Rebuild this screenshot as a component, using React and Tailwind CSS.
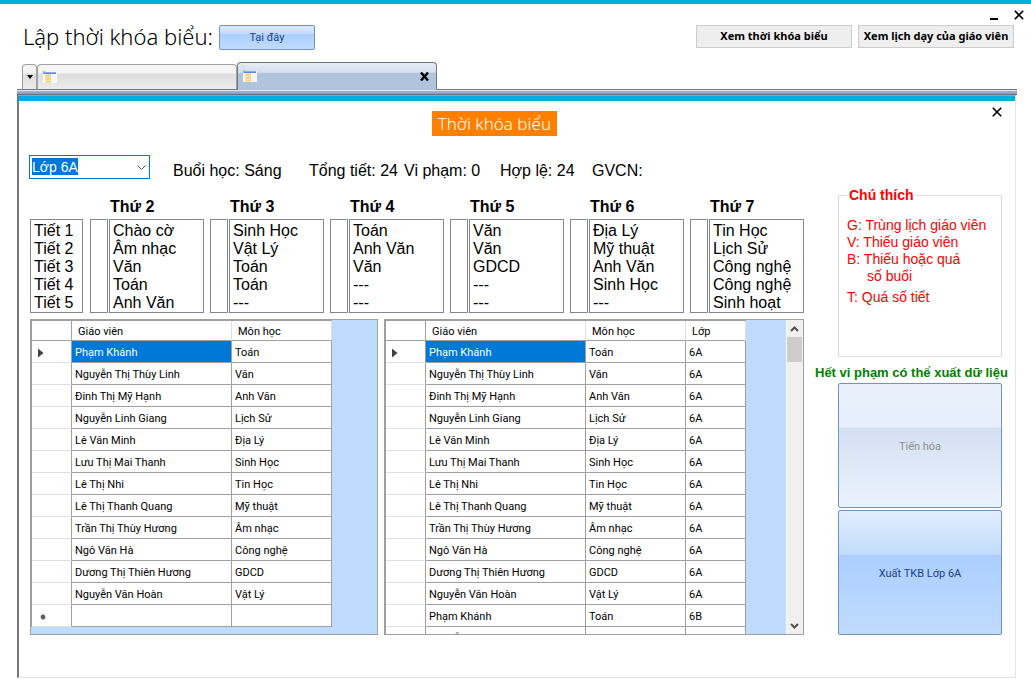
import React, { useState } from "react";

const periods = ["Tiết 1", "Tiết 2", "Tiết 3", "Tiết 4", "Tiết 5"];

const days = [
  { name: "Thứ 2", lessons: ["Chào cờ", "Âm nhạc", "Văn", "Toán", "Anh Văn"] },
  { name: "Thứ 3", lessons: ["Sinh Học", "Vật Lý", "Toán", "Toán", "---"] },
  { name: "Thứ 4", lessons: ["Toán", "Anh Văn", "Văn", "---", "---"] },
  { name: "Thứ 5", lessons: ["Văn", "Văn", "GDCD", "---", "---"] },
  {
    name: "Thứ 6",
    lessons: ["Địa Lý", "Mỹ thuật", "Anh Văn", "Sinh Học", "---"],
  },
  {
    name: "Thứ 7",
    lessons: ["Tin Học", "Lịch Sử", "Công nghệ", "Công nghệ", "Sinh hoạt"],
  },
];

const teachers = [
  ["Phạm Khánh", "Toán"],
  ["Nguyễn Thị Thùy Linh", "Văn"],
  ["Đinh Thị Mỹ Hạnh", "Anh Văn"],
  ["Nguyễn Linh Giang", "Lịch Sử"],
  ["Lê Văn Minh", "Địa Lý"],
  ["Lưu Thị Mai Thanh", "Sinh Học"],
  ["Lê Thị Nhi", "Tin Học"],
  ["Lê Thị Thanh Quang", "Mỹ thuật"],
  ["Trần Thị Thùy Hương", "Âm nhạc"],
  ["Ngô Văn Hà", "Công nghệ"],
  ["Dương Thị Thiên Hương", "GDCD"],
  ["Nguyễn Văn Hoàn", "Vật Lý"],
];

const classRows = [...teachers, ["", ""]];

const allRows = [
  ...teachers.map((row) => [...row, "6A"]),
  ["Phạm Khánh", "Toán", "6B"],
  ["Nguyễn Thị Thùy Linh", "Văn", "6B"],
];

const CloseIcon = () => (
  <svg width="10" height="10" viewBox="0 0 10 10" stroke="#000" strokeWidth="1.6">
    <path d="M0.8 0.8L9.2 9.2M9.2 0.8L0.8 9.2" />
  </svg>
);

const TabIcon = () => (
  <svg width="15" height="13" viewBox="0 0 15 13">
    <rect x="1" y="1" width="14" height="11" fill="#f8f8f6" />
    <rect x="0" y="0" width="4" height="1" fill="#d9cbb0" />
    <rect x="1" y="1" width="13" height="2" fill="#8fabe8" />
    <rect x="2" y="2" width="12" height="1" fill="#5f86dd" />
    <rect x="3" y="3" width="6" height="9" fill="#f6e3ae" />
    <rect x="4" y="4" width="5" height="2" fill="#efd48a" />
    <rect x="4" y="7" width="5" height="2" fill="#efd48a" />
    <rect x="4" y="10" width="5" height="1" fill="#efd48a" />
  </svg>
);

// List of lesson lines in a thin grey frame
const ListBox = ({ items = [], className }) => (
  <ul
    className={`h-[94px] border border-[#828790] bg-white pt-0.5 pl-[3px] text-base leading-[18px] whitespace-nowrap ${className}`}
  >
    {items.map((item, index) => (
      <li key={index}>{item}</li>
    ))}
  </ul>
);

const DataGrid = ({ columns, rows, newRow = false }) => (
  <table className="w-0 table-fixed border-separate border-spacing-0 border-t border-l border-[#a0a0a0] bg-white text-left font-[Roboto,'Liberation_Sans',sans-serif] text-[11px] leading-[14px] whitespace-nowrap">
    <thead>
      <tr className="h-5">
        <th className="w-10 border-r border-b border-[#a0a0a0] p-0" />
        {columns.map((column) => (
          <th
            key={column.label}
            className={`border-r border-b border-r-[#e0e0e0] border-b-[#a0a0a0] p-0 pt-0.5 pl-1.5 font-normal ${column.width}`}
          >
            {column.label}
          </th>
        ))}
      </tr>
    </thead>
    <tbody>
      {rows.map((row, index) => (
        <tr key={index} className="h-[22px]">
          <td className="border-r border-b border-r-[#a0a0a0] border-b-[#e0e0e0] p-0 pt-0.5 pl-1.5">
            {index === 0 && (
              <svg width="6" height="10" viewBox="0 0 6 10">
                <path d="M0 0.5L5.5 5L0 9.5Z" fill="#404040" />
              </svg>
            )}
            {newRow && index === rows.length - 1 && (
              <svg width="10" height="8" viewBox="0 0 10 8">
                <circle cx="5" cy="4" r="2" fill="#404040" />
                <path
                  d="M5 1V7M2.5 4H7.5M3.2 2.2L6.8 5.8M6.8 2.2L3.2 5.8"
                  stroke="#606060"
                />
              </svg>
            )}
          </td>
          {row.map((cell, cellIndex) => (
            <td
              key={cellIndex}
              className={`border-r border-b border-[#a0a0a0] p-0 pt-0.5 pl-[3px] ${
                index === 0 && cellIndex === 0 ? "bg-[#0078d7] text-white" : ""
              }`}
            >
              {cell}
            </td>
          ))}
        </tr>
      ))}
    </tbody>
  </table>
);

const App = () => {
  const [selectedClass, setSelectedClass] = useState("Lớp 6A");

  return (
    <div className="flex min-h-screen flex-col border-t-4 border-[#00aedb] bg-white font-['Liberation_Sans',Arial,sans-serif] text-black">
      {/* Window buttons */}
      <div className="flex h-[21px] items-center justify-end gap-4 pr-[7px]">
        <button aria-label="Thu nhỏ" className="flex h-2.5 w-2 items-end">
          <span className="h-0.5 w-full bg-black" />
        </button>
        <button aria-label="Đóng">
          <CloseIcon />
        </button>
      </div>

      {/* Header */}
      <header className="flex h-[37px] items-start pr-[17px] pl-[23px]">
        <h1 className="mr-1.5 font-['Noto_Sans','Open_Sans',sans-serif] text-[22px] leading-[23px] font-light whitespace-nowrap">
          Lập thời khóa biểu:
        </h1>
        <button className="h-[25px] w-24 rounded-xs border border-[#6f94c4] bg-[linear-gradient(#ddeafd_0%,#c3dafb_35%,#abcfff_36%,#c0dbff_100%)] pt-0.5 font-[Roboto,'Liberation_Sans',sans-serif] text-[11px] text-[#1e3f8a]">
          Tại đây
        </button>
        <div className="ml-auto flex gap-1.5 font-['Noto_Sans','Open_Sans',sans-serif] text-[11px] font-bold whitespace-nowrap">
          <button className="h-[23px] w-[156px] border border-[#ccc] bg-[#eee]">
            Xem thời khóa biểu
          </button>
          <button className="h-[23px] w-[156px] border border-[#ccc] bg-[#eee]">
            Xem lịch dạy của giáo viên
          </button>
        </div>
      </header>

      {/* Tabs */}
      <nav className="flex h-[27px] items-end pl-[22px]">
        <button
          aria-label="Danh sách thẻ"
          className="flex h-[25px] w-[15px] items-center justify-center rounded-t border border-b-0 border-[#a0a0a0] bg-[linear-gradient(#f4f4f4_35%,#dcdcdc_36%,#ececec)]"
        >
          <svg width="6" height="4" viewBox="0 0 6 4">
            <path d="M0 0H6L3 4Z" />
          </svg>
        </button>
        <button
          aria-label="Thẻ 1"
          className="flex h-[25px] w-[200px] items-center rounded-t border border-b-0 border-[#a0a0a0] bg-[linear-gradient(#f4f4f4_35%,#dcdcdc_36%,#ececec)] pl-1"
        >
          <TabIcon />
        </button>
        <div className="z-10 -mb-px flex h-7 w-[200px] items-center justify-between rounded-t border border-b-0 border-[#75777d] bg-[linear-gradient(#e6ecf6,#d5deee_35%,#b0c4de_36%)] pr-[7px] pl-1">
          <TabIcon />
          <button aria-label="Đóng thẻ">
            <svg width="9" height="9" viewBox="0 0 9 9" stroke="#000" strokeWidth="2.4">
              <path d="M1 0.5L8 8.5M8 0.5L1 8.5" />
            </svg>
          </button>
        </div>
      </nav>
      <div className="mr-[14px] ml-[17px] h-[6px] border-t border-[#75777d] bg-[linear-gradient(#e0e5ee_20%,#a3b4d4_21%,#8b9cbe_75%,#6a7080_80%)]" />

      {/* Active page */}
      <main className="mr-[15px] mb-3 ml-[17px] flex-1 border border-l-2 border-[#e3e3e3] border-t-[#a0a0a0] border-l-[#75777d]">
        <div className="h-[5px] bg-[#00aedb]" />
        <div className="flex h-[53px] items-start justify-between pt-1.5 pr-[13px]">
          <h2 className="mt-1 ml-[42%] h-[25px] w-[125px] bg-[#ff8000] text-center font-['Noto_Sans','Open_Sans',sans-serif] text-[17px] leading-[26px] font-light whitespace-nowrap text-white">
            Thời khóa biểu
          </h2>
          <button aria-label="Đóng trang">
            <CloseIcon />
          </button>
        </div>

        <div className="flex">
          <div className="min-w-0 flex-1 pr-[11px] pl-2.5">
            {/* Class picker and summary */}
            <div className="grid h-10 grid-cols-[144px_136px_95px_96px_92px_60px] items-start text-base leading-[34px] whitespace-nowrap">
              <div className="relative w-[121px]">
                <select
                  aria-label="Lớp"
                  value={selectedClass}
                  onChange={(e) => setSelectedClass(e.target.value)}
                  className="mt-px block h-6 w-full appearance-none border border-[#0078d7] bg-[linear-gradient(#0078d7,#0078d7)] bg-[length:46px_17px] bg-[position:2px_2px] bg-no-repeat pl-0.5 text-sm leading-5 text-white outline-none"
                >
                  <option>Lớp 6A</option>
                </select>
                <svg
                  className="pointer-events-none absolute top-[11px] right-1"
                  width="9"
                  height="6"
                  viewBox="0 0 9 6"
                  fill="none"
                  stroke="#505050"
                >
                  <path d="M0.5 0.5L4.5 4.5L8.5 0.5" />
                </svg>
              </div>
              <span>Buổi học: Sáng</span>
              <span>Tổng tiết: 24</span>
              <span>Vi phạm: 0</span>
              <span>Hợp lệ: 24</span>
              <span>GVCN:</span>
            </div>

            {/* Timetable */}
            <div className="flex items-end gap-[7px] pl-px">
              <ListBox items={periods} className="w-[53px]" />
              <div className="grid flex-1 grid-cols-6 gap-1.5">
                {days.map((day) => (
                  <section key={day.name}>
                    <h3 className="pl-5 text-base leading-[25px] font-bold">
                      {day.name}
                    </h3>
                    <div className="flex gap-px">
                      <ListBox className="w-[18px]" />
                      <ListBox items={day.lessons} className="flex-1" />
                    </div>
                  </section>
                ))}
              </div>
            </div>

            {/* Teacher grids */}
            <div className="mt-1.5 grid grid-cols-[348fr_420fr] gap-1.5 pl-px">
              <div className="h-[316px] overflow-hidden border border-[#a0a0a0] bg-[#bfdbff]">
                <DataGrid
                  columns={[
                    { label: "Giáo viên", width: "w-40" },
                    { label: "Môn học", width: "w-[100px]" },
                  ]}
                  rows={classRows}
                  newRow
                />
              </div>
              <div className="flex h-[316px] justify-between overflow-hidden border border-[#a0a0a0] bg-[#bfdbff]">
                <div>
                  <DataGrid
                    columns={[
                      { label: "Giáo viên", width: "w-40" },
                      { label: "Môn học", width: "w-[100px]" },
                      { label: "Lớp", width: "w-[60px]" },
                    ]}
                    rows={allRows}
                  />
                </div>
                <div className="flex w-[17px] flex-col items-center border-l border-white bg-[#f0f0f0] pr-px">
                  <svg width="9" height="17" viewBox="0 0 9 17" fill="none" stroke="#505050" strokeWidth="2">
                    <path d="M1 11L4.5 7.5L8 11" />
                  </svg>
                  <div className="h-[25px] w-[15px] bg-[#cdcdcd]" />
                  <svg
                    className="mt-auto"
                    width="9"
                    height="17"
                    viewBox="0 0 9 17"
                    fill="none"
                    stroke="#505050"
                    strokeWidth="2"
                  >
                    <path d="M1 7L4.5 10.5L8 7" />
                  </svg>
                </div>
              </div>
            </div>
          </div>

          {/* Legend and actions */}
          <aside className="w-[200px] pt-[33px]">
            <fieldset className="mr-[13px] ml-[23px] h-[170px] border border-[#dcdcdc] px-2 text-sm leading-[17px] whitespace-nowrap text-[#f00]">
              <legend className="px-0.5 font-bold">Chú thích</legend>
              <div className="pt-[13px]">
                <p>G: Trùng lịch giáo viên</p>
                <p>V: Thiếu giáo viên</p>
                <p>B: Thiếu hoặc quá</p>
                <p className="pl-5">số buổi</p>
                <p className="pt-1">T: Quá số tiết</p>
              </div>
            </fieldset>
            <p className="mt-2 mb-0.5 text-[13px] leading-4 font-bold whitespace-nowrap text-[#008000]">
              Hết vi phạm có thể xuất dữ liệu
            </p>
            <div className="mr-[13px] ml-[23px] flex flex-col gap-0.5 font-[Roboto,'Liberation_Sans',sans-serif] text-[11px]">
              <button
                disabled
                className="h-[125px] rounded-xs border border-[#6f94c4] bg-[linear-gradient(#e9f0fc_0%,#e7effc_35%,#d3e0f2_36%,#ebf2fd_100%)] pt-1 text-[#8d8d8d]"
              >
                Tiến hóa
              </button>
              <button className="h-[125px] rounded-xs border border-[#6f94c4] bg-[linear-gradient(#e1eefe_0%,#c3dcfc_35%,#abcfff_36%,#c0dbff_100%)] pt-1 text-[#1e3f8a]">
                Xuất TKB Lớp 6A
              </button>
            </div>
          </aside>
        </div>
      </main>
    </div>
  );
};

export default App;
